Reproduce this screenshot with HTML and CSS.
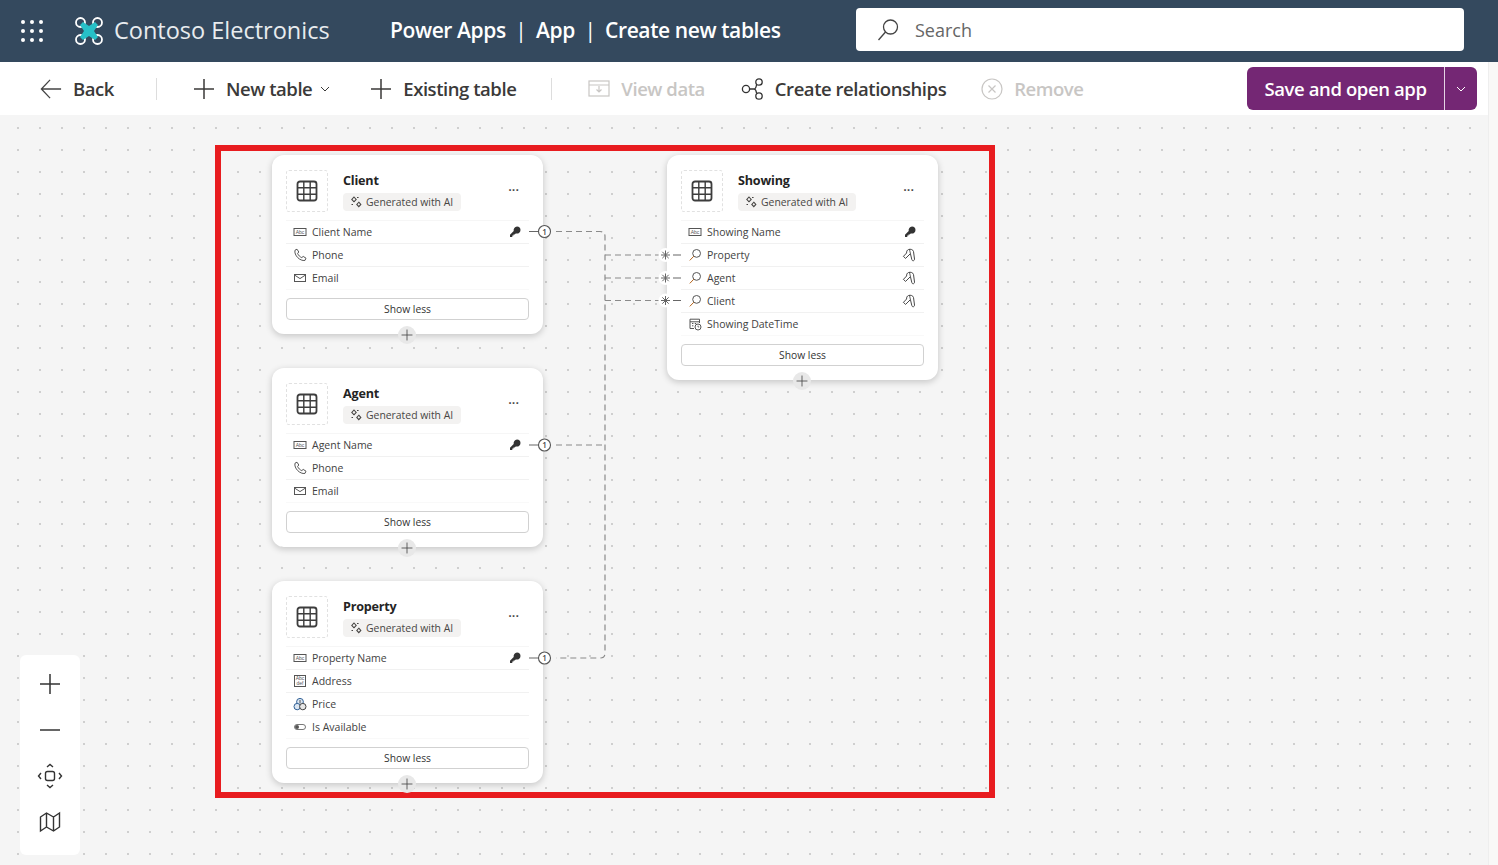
FILE: index.html
```html
<!DOCTYPE html>
<html lang="en">
<head>
    <meta charset="UTF-8">
    <title>Create new tables</title>
    <link rel="stylesheet" href="styles.css">
</head>
<body>
    <svg class="sprites" width="0" height="0">
        <symbol id="i-table" viewBox="0 0 22 22"><rect x="1.5" y="1.5" width="19" height="19" rx="2.5" fill="none" stroke="currentColor" stroke-width="1.8"/><path d="M1.5 7.8h19M1.5 14.2h19M7.8 1.5v19M14.2 1.5v19" fill="none" stroke="currentColor" stroke-width="1.4"/></symbol>
        <symbol id="i-spark" viewBox="0 0 12 12"><path d="M4 1 6.2 3.4 4 5.8 1.8 3.4ZM8.8 6.2 10.8 8.4 8.8 10.6 6.8 8.4Z" fill="none" stroke="currentColor" stroke-width="1.1"/><path d="M1.5 8.5h1.5M7 1.5h1.6" stroke="currentColor" stroke-width="1"/></symbol>
        <symbol id="i-phone" viewBox="0 0 14 14"><path d="M2 2.2 4 1.2 5.8 4 4.6 5.4C5.4 7.4 6.8 8.8 8.8 9.6L10.2 8.4 13 10.2 12 12.4C7 13.4.8 7.2 2 2.2Z" fill="none" stroke="currentColor"/></symbol>
        <symbol id="i-mail" viewBox="0 0 14 12"><rect x="1.5" y="2.5" width="11" height="7" fill="none" stroke="currentColor"/><path d="M1.5 3 7 6.6 12.5 3" fill="none" stroke="currentColor"/></symbol>
        <symbol id="i-lookup" viewBox="0 0 14 14"><circle cx="8.6" cy="5.4" r="3.9" fill="none" stroke="currentColor"/><path d="M5.8 8.2 1.8 12.4" stroke="#b5651d"/></symbol>
        <symbol id="i-date" viewBox="0 0 14 14"><path d="M6 11.5H2V2.2h9.5V6M2 4.8h9.5" fill="none" stroke="currentColor"/><path d="M4 6.5h1.4M6.8 6.5h1.4M4 8.8h1.4" stroke="currentColor"/><circle cx="10" cy="10" r="3" fill="#fff" stroke="currentColor"/><path d="M10 8.6V10h1.2" fill="none" stroke="currentColor" stroke-width=".8"/></symbol>
        <symbol id="i-price" viewBox="0 0 14 14"><circle cx="7" cy="4.8" r="3.4" fill="#dbe6f2" stroke="#2f5f95"/><circle cx="4.2" cy="9.6" r="3.2" fill="#dbe6f2" stroke="#2f5f95"/><circle cx="9.8" cy="9.6" r="3.2" fill="#e8e8e8" stroke="#444"/><path d="M7 3v3.4" stroke="#444" stroke-width=".9"/></symbol>
        <symbol id="i-toggle" viewBox="0 0 14 14"><rect x="1.5" y="4.5" width="11" height="5" rx="2.5" fill="none" stroke="currentColor" stroke-width=".8"/><circle cx="4" cy="7" r="2" fill="currentColor"/></symbol>
        <symbol id="i-key" viewBox="0 0 12 12"><path d="M8 .5A3.600 3.600 0 0 1 11.500 4 3.600 3.600 0 0 1 6.800 7.400L5.600 8.500H4.500V9.600H3.300V10.900H1V8.700L4.700 4.900A3.600 3.600 0 0 1 8 .5Z" fill="currentColor"/></symbol>
        <symbol id="i-fkey" viewBox="0 0 14 14"><path d="M6.500 1.500C8.500.8 11 1.500 11.500 3.500L12.500 11C12.600 13 10.200 13.400 9.800 11.500L8.600 6.400 8 6 3.600 10.400 1.400 8.400 4.600 5C4.400 3.400 5.200 2 6.500 1.500Z" fill="none" stroke="currentColor" stroke-width=".9"/><path d="M7.500 1.400 8.600 6.400" stroke="currentColor" stroke-width=".8"/></symbol>
        <symbol id="i-plus" viewBox="0 0 22 22"><path d="M11 1v20M1 11h20" stroke="currentColor" stroke-width="1.5"/></symbol>
        <symbol id="i-chev" viewBox="0 0 10 6"><path d="M1 1 5 5 9 1" fill="none" stroke="currentColor"/></symbol>
    </svg>

    <header class="topbar">
        <div class="waffle">
            <i></i><i></i><i></i><i></i><i></i><i></i><i></i><i></i><i></i>
        </div>
        <div class="brand">
            <svg class="brand-logo" width="30" height="30" viewBox="0 0 30 30">
                <g fill="none" stroke="#fff" stroke-width="1.8">
                    <circle cx="6.5" cy="6.5" r="4.5"/><circle cx="23.5" cy="6.5" r="4.5"/><circle cx="6.5" cy="23.5" r="4.5"/><circle cx="23.5" cy="23.5" r="4.5"/>
                </g>
                <path d="M6 9 9 6 15 10 21 6 24 9 20 15 24 21 21 24 15 20 9 24 6 21 10 15Z" fill="#27c0c8"/>
            </svg>
            <span>Contoso Electronics</span>
        </div>
        <div class="crumbs">Power Apps <b>|</b> App <b>|</b> Create new tables</div>
        <div class="search">
            <svg width="24" height="24" viewBox="0 0 24 24"><circle cx="14.5" cy="9" r="7" fill="none" stroke="#444" stroke-width="1.3"/><path d="M9.5 14 2.5 22" stroke="#444" stroke-width="1.3"/></svg>
            <span>Search</span>
        </div>
    </header>

    <div class="workspace">
        <div class="work-main">
            <nav class="toolbar">
                <div class="tool tool-back">
                    <svg width="22" height="22" viewBox="0 0 24 22"><path d="M11 1 1.500 11 11 21M1.500 11H23" fill="none" stroke="#444" stroke-width="1.4"/></svg>
                    <span>Back</span>
                </div>
                <div class="sep sep-first"></div>
                <div class="tool tool-new">
                    <svg width="22" height="22"><use href="#i-plus"/></svg>
                    <span>New table</span>
                    <svg class="chev" width="10" height="6"><use href="#i-chev"/></svg>
                </div>
                <div class="tool tool-existing">
                    <svg width="22" height="22"><use href="#i-plus"/></svg>
                    <span>Existing table</span>
                </div>
                <div class="sep sep-second"></div>
                <div class="tool tool-view off">
                    <svg width="22" height="18" viewBox="0 0 22 18"><rect x="1" y="1" width="20" height="15" fill="none" stroke="currentColor" stroke-width="1.2"/><path d="M1 5h20M11 6v6M8.500 9.500 11 12l2.500-2.500" fill="none" stroke="currentColor" stroke-width="1.2"/></svg>
                    <span>View data</span>
                </div>
                <div class="tool tool-rel">
                    <svg width="24" height="24" viewBox="0 0 24 24" fill="none" stroke="#333" stroke-width="1.3"><circle cx="5" cy="12" r="3.600"/><circle cx="18" cy="5" r="3.200"/><circle cx="18" cy="19" r="3.200"/><path d="M8.600 12H13C14.500 12 15 11 15.500 8M13 12C14.500 12 15 13 15.500 16"/></svg>
                    <span>Create relationships</span>
                </div>
                <div class="tool tool-remove off">
                    <svg width="22" height="22" viewBox="0 0 22 22" fill="none" stroke="currentColor" stroke-width="1.2"><circle cx="11" cy="11" r="10"/><path d="M7.500 7.500l7 7M14.500 7.500l-7 7"/></svg>
                    <span>Remove</span>
                </div>
                <div class="save-btn">
                    <span class="save-label">Save and open app</span>
                    <span class="save-more"><svg width="10" height="6"><use href="#i-chev"/></svg></span>
                </div>
            </nav>

            <main class="canvas">
                <div class="highlight"></div>

                <section class="node node-client">
                    <div class="node-head">
                        <div class="node-icon"><svg width="22" height="22"><use href="#i-table"/></svg></div>
                        <div class="node-title">
                            <h2>Client</h2>
                            <div class="chip"><svg width="12" height="12"><use href="#i-spark"/></svg>Generated with AI</div>
                        </div>
                        <div class="dots">...</div>
                    </div>
                    <ul class="fields">
                        <li><svg width="14" height="12" viewBox="0 0 14 12"><rect x="1" y="2.500" width="12" height="7" fill="none" stroke="currentColor"/><text x="7" y="8" class="tiny">Abc</text></svg><span>Client Name</span><svg class="key" width="12" height="12"><use href="#i-key"/></svg></li>
                        <li><svg width="14" height="14"><use href="#i-phone"/></svg><span>Phone</span></li>
                        <li><svg width="14" height="12"><use href="#i-mail"/></svg><span>Email</span></li>
                    </ul>
                    <div class="show-less">Show less</div>
                    <div class="add-col"><svg width="12" height="12"><use href="#i-plus"/></svg></div>
                </section>

                <section class="node node-agent">
                    <div class="node-head">
                        <div class="node-icon"><svg width="22" height="22"><use href="#i-table"/></svg></div>
                        <div class="node-title">
                            <h2>Agent</h2>
                            <div class="chip"><svg width="12" height="12"><use href="#i-spark"/></svg>Generated with AI</div>
                        </div>
                        <div class="dots">...</div>
                    </div>
                    <ul class="fields">
                        <li><svg width="14" height="12" viewBox="0 0 14 12"><rect x="1" y="2.500" width="12" height="7" fill="none" stroke="currentColor"/><text x="7" y="8" class="tiny">Abc</text></svg><span>Agent Name</span><svg class="key" width="12" height="12"><use href="#i-key"/></svg></li>
                        <li><svg width="14" height="14"><use href="#i-phone"/></svg><span>Phone</span></li>
                        <li><svg width="14" height="12"><use href="#i-mail"/></svg><span>Email</span></li>
                    </ul>
                    <div class="show-less">Show less</div>
                    <div class="add-col"><svg width="12" height="12"><use href="#i-plus"/></svg></div>
                </section>

                <section class="node node-property">
                    <div class="node-head">
                        <div class="node-icon"><svg width="22" height="22"><use href="#i-table"/></svg></div>
                        <div class="node-title">
                            <h2>Property</h2>
                            <div class="chip"><svg width="12" height="12"><use href="#i-spark"/></svg>Generated with AI</div>
                        </div>
                        <div class="dots">...</div>
                    </div>
                    <ul class="fields">
                        <li><svg width="14" height="12" viewBox="0 0 14 12"><rect x="1" y="2.500" width="12" height="7" fill="none" stroke="currentColor"/><text x="7" y="8" class="tiny">Abc</text></svg><span>Property Name</span><svg class="key" width="12" height="12"><use href="#i-key"/></svg></li>
                        <li><svg width="14" height="14" viewBox="0 0 14 14"><rect x="1.500" y="1.500" width="11" height="11" fill="none" stroke="currentColor"/><text x="7" y="6.200" class="tiny">Abc</text><text x="7" y="11" class="tiny">def</text></svg><span>Address</span></li>
                        <li><svg width="14" height="14"><use href="#i-price"/></svg><span>Price</span></li>
                        <li><svg width="14" height="14"><use href="#i-toggle"/></svg><span>Is Available</span></li>
                    </ul>
                    <div class="show-less">Show less</div>
                    <div class="add-col"><svg width="12" height="12"><use href="#i-plus"/></svg></div>
                </section>

                <section class="node node-showing">
                    <div class="node-head">
                        <div class="node-icon"><svg width="22" height="22"><use href="#i-table"/></svg></div>
                        <div class="node-title">
                            <h2>Showing</h2>
                            <div class="chip"><svg width="12" height="12"><use href="#i-spark"/></svg>Generated with AI</div>
                        </div>
                        <div class="dots">...</div>
                    </div>
                    <ul class="fields">
                        <li><svg width="14" height="12" viewBox="0 0 14 12"><rect x="1" y="2.500" width="12" height="7" fill="none" stroke="currentColor"/><text x="7" y="8" class="tiny">Abc</text></svg><span>Showing Name</span><svg class="key" width="12" height="12"><use href="#i-key"/></svg></li>
                        <li><svg width="14" height="14"><use href="#i-lookup"/></svg><span>Property</span><svg class="key" width="14" height="14"><use href="#i-fkey"/></svg></li>
                        <li><svg width="14" height="14"><use href="#i-lookup"/></svg><span>Agent</span><svg class="key" width="14" height="14"><use href="#i-fkey"/></svg></li>
                        <li><svg width="14" height="14"><use href="#i-lookup"/></svg><span>Client</span><svg class="key" width="14" height="14"><use href="#i-fkey"/></svg></li>
                        <li><svg width="14" height="14"><use href="#i-date"/></svg><span>Showing DateTime</span></li>
                    </ul>
                    <div class="show-less">Show less</div>
                    <div class="add-col"><svg width="12" height="12"><use href="#i-plus"/></svg></div>
                </section>

                <svg class="links" width="1488" height="750" viewBox="0 115 1488 750">
                    <g fill="none" stroke="#8a8a8a" stroke-width="1.2" stroke-dasharray="6 4">
                        <path d="M556 231.500H600Q605 231.500 605 236.500V653Q605 658 600 658H556"/>
                        <path d="M556 445H605"/>
                        <path d="M605 255H660M605 278H660M605 300.500H660"/>
                    </g>
                    <g fill="none" stroke="#666" stroke-width="1.2">
                        <path d="M529 231.500H538M529 445H538M529 658H538M673 255H681M673 278H681M673 300.500H681"/>
                    </g>
                    <g class="one"><circle cx="544.500" cy="231.500" r="6"/><text x="544.500" y="234.500">1</text></g>
                    <g class="one"><circle cx="544.500" cy="445" r="6"/><text x="544.500" y="448">1</text></g>
                    <g class="one"><circle cx="544.500" cy="658" r="6"/><text x="544.500" y="661">1</text></g>
                    <g class="many"><circle cx="665.500" cy="255" r="7"/><path d="M661 255h9M665.500 250.500v9M662.300 251.800l6.400 6.400M668.700 251.800l-6.400 6.400"/></g>
                    <g class="many"><circle cx="665.500" cy="278" r="7"/><path d="M661 278h9M665.500 273.500v9M662.300 274.800l6.400 6.400M668.700 274.800l-6.400 6.400"/></g>
                    <g class="many"><circle cx="665.500" cy="300.500" r="7"/><path d="M661 300.500h9M665.500 296v9M662.300 297.300l6.400 6.400M668.700 297.300l-6.400 6.400"/></g>
                </svg>

                <div class="zoom-panel">
                    <svg width="22" height="22"><use href="#i-plus"/></svg>
                    <svg width="22" height="22" viewBox="0 0 22 22"><path d="M1 11h20" stroke="#333" stroke-width="1.5"/></svg>
                    <svg width="26" height="26" viewBox="0 0 26 26" fill="none" stroke="#333" stroke-width="1.4"><rect x="8.500" y="8.500" width="9" height="9" rx="2"/><path d="M10 4 13 1.500 16 4M10 22 13 24.500 16 22M4 10 1.500 13 4 16M22 10 24.500 13 22 16"/></svg>
                    <svg width="22" height="22" viewBox="0 0 22 22" fill="none" stroke="#333" stroke-width="1.4"><path d="M1.500 6 7.500 2 14.500 6 20.500 2V16L14.500 20 7.500 16 1.500 20ZM7.500 2V16M14.500 6V20"/></svg>
                </div>
            </main>
        </div>
        <div class="scroll-track"></div>
    </div>
</body>
</html>
```
FILE: styles.css
```css
* {
    box-sizing: border-box;
}

body {
    margin: 0;
    height: 865px;
    overflow: hidden;
    font-family: "Open Sans", "Noto Sans", sans-serif;
    color: #323130;
    background-color: #f5f5f5;
}

.sprites {
    position: absolute;
}

.tiny {
    font-family: "Liberation Sans", sans-serif;
    font-size: 5px;
    text-anchor: middle;
    fill: currentColor;
}

/* top bar */
.topbar {
    height: 62px;
    background-color: #34495e;
    display: flex;
    align-items: center;
    color: #fff;
}

.waffle {
    width: 22px;
    margin-left: 21px;
    display: grid;
    grid-template-columns: repeat(3, 4px);
    gap: 5px;
}

.waffle i {
    width: 4px;
    height: 4px;
    border-radius: 50%;
    background-color: #fff;
}

.brand {
    margin-left: 31px;
    width: 316px;
    display: flex;
    align-items: center;
    gap: 10px;
    font-size: 23.500px;
    color: #e8ecef;
}

.brand span {
    margin-top: -3px;
}

.brand-logo {
    flex: none;
}

.crumbs {
    width: 466px;
    margin-top: -2px;
    font-size: 21px;
    font-weight: 600;
    white-space: nowrap;
    letter-spacing: -0.4px;
}

.crumbs b {
    font-weight: 400;
    margin: 0 4.500px;
}

.search {
    width: 608px;
    height: 43px;
    align-self: flex-start;
    margin-top: 8px;
    background-color: #fff;
    border-radius: 4px;
    display: flex;
    align-items: center;
    padding-left: 20px;
    gap: 15px;
    font-size: 18px;
    color: #666;
}

.workspace {
    display: flex;
}

.work-main {
    flex: 1;
    min-width: 0;
}

.scroll-track {
    width: 10px;
    height: 803px;
    background-color: #f9f8f7;
    border-left: 1px solid #eeeeee;
}

/* toolbar */
.toolbar {
    height: 53px;
    background-color: #fff;
    display: flex;
    align-items: center;
}

.tool {
    display: flex;
    align-items: center;
    gap: 11px;
    font-size: 18.500px;
    font-weight: 600;
    color: #3b3a39;
    letter-spacing: -0.45px;
    white-space: nowrap;
}

.tool.off {
    color: #c8c6c4;
}

.tool-back {
    margin-left: 40px;
}

.sep {
    width: 1px;
    height: 22px;
    background-color: #ddd;
}

.sep-first {
    margin-left: 42px;
}

.tool-new {
    margin-left: 36px;
}

.chev {
    margin-left: -3px;
}

.tool-existing {
    margin-left: 40px;
}

.sep-second {
    margin-left: 35px;
}

.tool-view {
    margin-left: 36px;
}

.tool-rel {
    margin-left: 36px;
    gap: 10px;
}

.tool-remove {
    margin-left: 35px;
}

.save-btn {
    margin-left: auto;
    margin-right: 11px;
    width: 230px;
    height: 43px;
    background-color: #742774;
    border-radius: 6px;
    display: flex;
    align-items: stretch;
    color: #fff;
}

.save-label {
    flex: 1;
    display: flex;
    align-items: center;
    justify-content: center;
    font-size: 18.500px;
    font-weight: 600;
    letter-spacing: -0.4px;
    white-space: nowrap;
}

.save-more {
    width: 33px;
    border-left: 1px solid #e5d4e5;
    display: flex;
    align-items: center;
    justify-content: center;
}

/* canvas */
.canvas {
    position: relative;
    height: 750px;
    background-color: #f5f5f5;
    background-image: radial-gradient(circle, #cfcfcf 1px, transparent 1.2px);
    background-size: 22px 22px;
    background-position: 7px 2px;
}

.highlight {
    position: absolute;
    left: 215px;
    top: 30px;
    width: 780px;
    height: 653px;
    border: 6px solid #e81c1f;
}

.links {
    position: absolute;
    left: 0;
    top: 0;
}

.one circle {
    fill: #fff;
    stroke: #555;
    stroke-width: 1.1;
}

.one text {
    font-size: 8px;
    font-weight: 600;
    text-anchor: middle;
    fill: #444;
}

.many circle {
    fill: #fff;
}

.many path {
    fill: none;
    stroke: #666;
    stroke-width: 1;
}

.node {
    position: absolute;
    width: 271px;
    background-color: #fff;
    border-radius: 12px;
    padding: 15px 14px 14px;
    box-shadow: 0 2px 7px rgba(0, 0, 0, 0.2);
}

.node-client {
    left: 272px;
    top: 40px;
}

.node-agent {
    left: 272px;
    top: 253px;
}

.node-property {
    left: 272px;
    top: 466px;
}

.node-showing {
    left: 667px;
    top: 40px;
}

.node-head {
    display: flex;
    height: 50px;
}

.node-icon {
    width: 42px;
    height: 42px;
    border: 1px dashed #e1e1e1;
    border-radius: 3px;
    display: flex;
    align-items: center;
    justify-content: center;
    color: #3d3d3d;
}

.node-title {
    margin-left: 15px;
}

h2 {
    margin: 0;
    font-size: 12.600px;
    font-weight: 700;
    line-height: 21px;
    letter-spacing: -0.2px;
    color: #242424;
}

.chip {
    margin-top: 2px;
    width: 118px;
    height: 18px;
    background-color: #f3f2f1;
    border-radius: 4px;
    display: flex;
    align-items: center;
    gap: 4px;
    padding-left: 7px;
    font-size: 10.400px;
    color: #484644;
    white-space: nowrap;
}

.dots {
    margin-left: auto;
    margin-right: 10px;
    line-height: 33px;
    font-size: 13px;
    font-weight: 600;
    color: #444;
}

.fields {
    list-style: none;
    margin: 0;
    padding: 0;
    border-top: 1px solid #f6f6f6;
}

.fields li {
    height: 23px;
    display: flex;
    align-items: center;
    gap: 5px;
    padding: 0 7px;
    border-bottom: 1px solid #f1f1f1;
    font-size: 10.500px;
    color: #424242;
}

.fields li:last-child {
    border-bottom-color: #f9f9f9;
}

.fields li svg {
    color: #555;
    flex: none;
}

.fields .key {
    margin-left: auto;
    margin-right: 1px;
}

.fields li .key {
    color: #333;
}

.show-less {
    margin-top: 8px;
    height: 22px;
    border: 1px solid #d1d1d1;
    border-radius: 4px;
    display: flex;
    align-items: center;
    justify-content: center;
    font-size: 10.300px;
    color: #333;
}

.add-col {
    position: absolute;
    left: 126px;
    bottom: -10px;
    width: 18px;
    height: 18px;
    border-radius: 50%;
    background-color: #e8e8e8;
    display: flex;
    align-items: center;
    justify-content: center;
    color: #444;
}

.zoom-panel {
    position: absolute;
    left: 20px;
    top: 540px;
    width: 60px;
    height: 200px;
    background-color: #fff;
    border-radius: 6px;
    display: grid;
    grid-auto-rows: 46px;
    align-items: center;
    justify-items: center;
    padding-top: 6px;
    color: #333;
}
```
